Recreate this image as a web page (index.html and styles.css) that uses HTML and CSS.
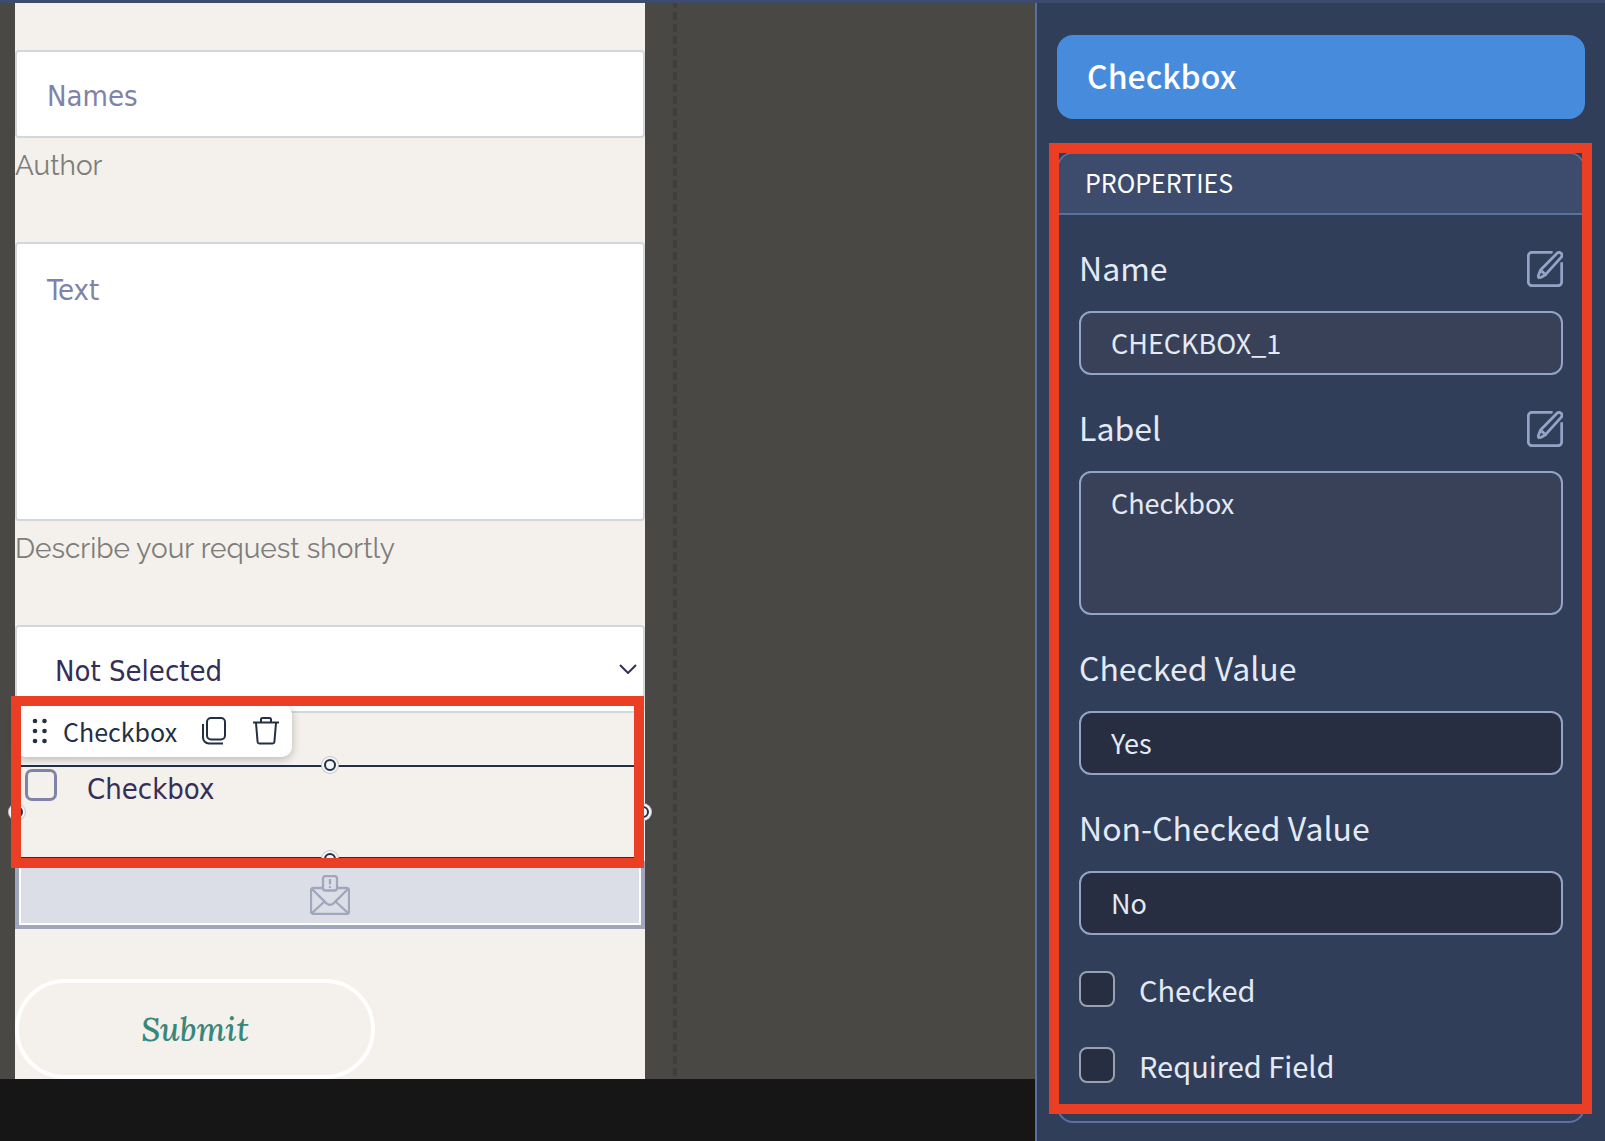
FILE: index.html
```html
<!DOCTYPE html>
<html lang="en">
  <head>
    <meta charset="UTF-8" />
    <meta name="viewport" content="width=device-width, initial-scale=1.0" />
    <title>Form Editor</title>
    <link rel="stylesheet" href="styles.css">
  </head>
  <body>
    <div class="editor">
      <main class="workspace">
        <div class="canvas">
          <form class="page">
            <input class="field" type="text" placeholder="Names" aria-label="Names" />
            <p class="hint">Author</p>

            <textarea class="field field-area" placeholder="Text" aria-label="Text"></textarea>
            <p class="hint">Describe your request shortly</p>

            <div class="select-wrap">
              <select class="field" aria-label="Option">
                <option>Not Selected</option>
              </select>
              <svg class="chevron" viewBox="0 0 18 10"><path d="M1 1l8 8 8-8" /></svg>
            </div>

            <!-- Selected widget -->
            <div class="widget">
              <label class="widget-label">
                <input type="checkbox" class="widget-check" />
                Checkbox
              </label>
              <span class="handle handle-top"></span>
              <span class="handle handle-bottom"></span>
              <span class="handle handle-left"></span>
              <span class="handle handle-right"></span>

              <div class="toolbar">
                <svg class="grip" width="16" height="26" viewBox="0 0 16 26">
                  <circle cx="3" cy="3" r="2.3" /><circle cx="12.500" cy="3" r="2.3" />
                  <circle cx="3" cy="13" r="2.3" /><circle cx="12.500" cy="13" r="2.3" />
                  <circle cx="3" cy="23" r="2.3" /><circle cx="12.500" cy="23" r="2.3" />
                </svg>
                <span class="toolbar-title">Checkbox</span>
                <button type="button" class="tool" aria-label="Copy">
                  <svg width="26" height="30" viewBox="0 0 26 30">
                    <rect x="6" y="2" width="18" height="21.5" rx="4" />
                    <path d="M2 8v13.500a6 6 0 0 0 6 6h14" />
                  </svg>
                </button>
                <button type="button" class="tool" aria-label="Delete">
                  <svg width="26" height="30" viewBox="0 0 26 30">
                    <path d="M0 6.500h26M8 6V3.500a1.500 1.500 0 0 1 1.500-1.500h7a1.500 1.500 0 0 1 1.500 1.500V6M3 7l1.600 19a1.700 1.700 0 0 0 1.700 1.500h13.400a1.700 1.700 0 0 0 1.700-1.500L23 7" />
                  </svg>
                </button>
              </div>
              <div class="mark mark-widget"></div>
            </div>

            <div class="hidden-field">
              <svg width="40" height="40" viewBox="0 0 40 40">
                <rect x="1" y="13" width="38" height="26" rx="2.500" />
                <path d="M2 14l14.500 14.300q3.500 3 7 0L38 14M2 38l12.500-11.500M38 38L25.500 26.500" />
                <rect class="badge" x="13" y="1" width="14" height="14.500" rx="2.500" />
                <path class="bang" d="M20 4v5.500M20 11.200v1.800" />
              </svg>
            </div>

            <button type="submit" class="submit">Submit</button>
          </form>
          <div class="guide"></div>
        </div>
        <div class="footer"></div>
      </main>

      <aside class="panel">
        <h1 class="panel-title">Checkbox</h1>
        <section class="card">
          <h2 class="card-title">Properties</h2>
          <div class="card-body">
            <div class="prop">
              <div class="prop-head">
                <label for="name">Name</label>
                <button type="button" class="edit" aria-label="Edit name">
                  <svg width="36" height="36" viewBox="0 0 36 36">
                    <path d="M24.500 1.300H5a3.700 3.700 0 0 0-3.700 3.700v26A3.700 3.700 0 0 0 5 34.700h26a3.700 3.700 0 0 0 3.700-3.700V12.500" />
                    <path d="M30 2.300a2.900 2.900 0 0 1 4.100 4.100L18.500 23.600l-4.200 2.700q-3.700 1.400-2.800-2l2-5.200zM13.600 19l5 4.700" />
                  </svg>
                </button>
              </div>
              <input id="name" class="control" type="text" value="CHECKBOX_1" />
            </div>
            <div class="prop">
              <div class="prop-head">
                <label for="label">Label</label>
                <button type="button" class="edit" aria-label="Edit label">
                  <svg width="36" height="36" viewBox="0 0 36 36">
                    <path d="M24.500 1.300H5a3.700 3.700 0 0 0-3.700 3.700v26A3.700 3.700 0 0 0 5 34.700h26a3.700 3.700 0 0 0 3.700-3.700V12.500" />
                    <path d="M30 2.300a2.900 2.900 0 0 1 4.100 4.100L18.500 23.600l-4.200 2.700q-3.700 1.400-2.800-2l2-5.200zM13.600 19l5 4.700" />
                  </svg>
                </button>
              </div>
              <textarea id="label" class="control control-area">Checkbox</textarea>
            </div>
            <div class="prop">
              <div class="prop-head"><label for="checked-value">Checked Value</label></div>
              <input id="checked-value" class="control control-dark" type="text" value="Yes" />
            </div>
            <div class="prop">
              <div class="prop-head"><label for="unchecked-value">Non-Checked Value</label></div>
              <input id="unchecked-value" class="control control-dark" type="text" value="No" />
            </div>
            <div class="toggles">
              <label class="toggle"><input type="checkbox" /> Checked</label>
              <label class="toggle"><input type="checkbox" /> Required Field</label>
            </div>
          </div>
          <div class="mark mark-card"></div>
        </section>
      </aside>
    </div>
  </body>
</html>
```
FILE: styles.css
```css
* {
  box-sizing: border-box;
}

body {
  margin: 0;
  background-color: #303e59;
  font-family: "Noto Sans CJK SC", "Noto Sans", sans-serif;
}

.editor {
  display: flex;
  height: 100vh;
  border-top: 3px solid #3d4c6d;
  overflow: hidden;
}

/* Workspace */

.workspace {
  flex: 1;
  min-width: 0;
  display: flex;
  flex-direction: column;
}

.canvas {
  flex: 1;
  min-height: 0;
  display: flex;
  padding-left: 15px;
  background-color: #4a4845;
}

.page {
  flex: 0 1 630px;
  padding-top: 47px;
  background-color: #f4f0eb;
}

.guide {
  width: 4px;
  margin-left: 28px;
  background: repeating-linear-gradient(#3f3f3f 0 5px, transparent 5px 9px, #3f3f3f 9px 12px);
}

.footer {
  height: 62px;
  background-color: #161616;
}

.field {
  display: block;
  width: 100%;
  height: 88px;
  padding: 4px 30px 0;
  border: 2px solid #d3d7da;
  border-radius: 4px;
  background-color: #fff;
  color: #352f57;
  font-family: "DejaVu Sans Condensed", "DejaVu Sans", sans-serif;
  font-size: 29px;
  appearance: none;
}

.field::placeholder {
  color: #8082a8;
  opacity: 1;
}

.field-area {
  height: 279px;
  padding-top: 29px;
  resize: none;
}

.hint {
  height: 104px;
  margin: 0;
  padding-top: 11px;
  color: #7d7d7b;
  font-family: Raleway, Lato, sans-serif;
  font-size: 28px;
  line-height: 34px;
}

.select-wrap {
  position: relative;
}

.select-wrap .field {
  padding: 4px 38px 0;
}

.chevron {
  position: absolute;
  right: 8px;
  top: 39px;
  width: 18px;
  height: 10px;
  fill: none;
  stroke: #352f57;
  stroke-width: 2;
}

.widget {
  position: relative;
  height: 94px;
  margin: 52px 1px 2px;
  padding: 2px 7px;
  border: 2px solid #232f42;
  box-shadow: 0 0 0 1px #f3f5f9;
}

.widget-label {
  display: flex;
  gap: 30px;
  color: #352f57;
  font-family: "DejaVu Sans Condensed", "DejaVu Sans", sans-serif;
  font-size: 29px;
  line-height: 40px;
}

.widget-check {
  width: 32px;
  height: 32px;
  margin: 0;
  border: 3px solid #8082a8;
  border-radius: 7px;
  appearance: none;
}

.handle {
  position: absolute;
  width: 12px;
  height: 12px;
  border: 2px solid #232f42;
  border-radius: 50%;
  background-color: #f3f5f9;
  box-shadow: 0 0 0 2px #f3f5f9, 0 0 0 3px #c4c6cb;
}

.handle-top {
  top: -8px;
  left: calc(50% - 6px);
}

.handle-bottom {
  bottom: -8px;
  left: calc(50% - 6px);
}

.handle-left {
  left: -7px;
  top: calc(50% - 6px);
}

.handle-right {
  right: -7px;
  top: calc(50% - 6px);
}

.toolbar {
  position: absolute;
  top: -63px;
  left: -3px;
  display: flex;
  align-items: center;
  height: 53px;
  padding: 0 13px 0 17px;
  border-radius: 10px;
  background-color: #fff;
  color: #232f42;
  box-shadow: 0 2px 8px rgba(0, 0, 0, 0.25);
}

.toolbar-title {
  margin: 0 8px 0 15px;
  font-size: 25px;
  line-height: 36px;
}

.grip {
  fill: #232f42;
}

.tool {
  display: flex;
  margin-left: 16px;
  padding: 0;
  border: none;
  background: none;
}

.tool + .tool {
  margin-left: 26px;
}

.tool svg {
  fill: none;
  stroke: #232f42;
  stroke-width: 2;
}

/* Red highlight frames */

.mark {
  position: absolute;
  border: 10px solid #eb3f25;
  pointer-events: none;
}

.mark-widget {
  top: -71px;
  right: -2px;
  bottom: -11px;
  left: -7px;
}

.mark-card {
  top: -11px;
  right: -9px;
  bottom: 7px;
  left: -10px;
}

.hidden-field {
  display: flex;
  justify-content: center;
  padding: 8px 0;
  height: 68px;
  border: 4px solid #a0a7bc;
  background-color: #dbdee6;
  box-shadow: inset 0 0 0 2px #fff;
}

.hidden-field svg {
  margin-top: 2px;
  fill: none;
  stroke: #a0a7bc;
  stroke-width: 2.3;
}

.hidden-field .badge {
  fill: #dbdee6;
}

.submit {
  width: 360px;
  height: 100px;
  margin-top: 50px;
  padding: 0;
  border: 4px solid #fff;
  border-radius: 50px;
  background: none;
  color: #38877a;
  font-family: Lora, "Liberation Serif", serif;
  font-size: 33px;
  font-style: italic;
  font-weight: 500;
}

/* Right panel */

.panel {
  flex: 0 0 570px;
  padding: 32px 20px;
  border-left: 2px solid #5a71a0;
  background-color: #303e59;
  color: #e4eaf5;
}

.panel-title {
  height: 84px;
  margin: 0 0 33px;
  padding: 0 30px;
  border-radius: 16px;
  background-color: #478bdd;
  color: #fff;
  font-size: 32px;
  font-weight: 500;
  line-height: 80px;
}

.card {
  position: relative;
  border: 2px solid #5a71a0;
  border-radius: 16px;
}

.card-title {
  height: 61px;
  margin: 0;
  padding: 0 26px;
  border-bottom: 2px solid #5a71a0;
  border-radius: 14px 14px 0 0;
  background-color: #3d4c6d;
  color: #fff;
  font-size: 25px;
  font-weight: 400;
  line-height: 56px;
  text-transform: uppercase;
}

.card-body {
  padding: 0 20px 38px;
}

.prop {
  padding-top: 28px;
}

.prop-head {
  display: flex;
  align-items: center;
  justify-content: space-between;
  height: 52px;
  margin-bottom: 16px;
  font-size: 32px;
  line-height: 48px;
}

.prop-head label {
  padding-bottom: 4px;
}

.edit {
  display: flex;
  padding: 0;
  border: none;
  background: none;
}

.edit svg {
  fill: none;
  stroke: #94a3c6;
  stroke-width: 2.8;
  stroke-linecap: round;
  stroke-linejoin: round;
}

.control {
  display: block;
  width: 100%;
  height: 64px;
  padding: 0 30px 2px;
  border: 2px solid #94a3c6;
  border-radius: 12px;
  background-color: #394159;
  color: #e4eaf5;
  font-family: inherit;
  font-size: 27px;
}

.control-area {
  height: 144px;
  padding-top: 10px;
  line-height: 40px;
  resize: none;
}

.control-dark {
  background-color: #272e41;
}

.toggles {
  display: flex;
  flex-direction: column;
  gap: 40px;
  padding-top: 36px;
}

.toggle {
  display: flex;
  align-items: center;
  gap: 24px;
  height: 36px;
  font-size: 29px;
  line-height: 36px;
}

.toggle input {
  width: 36px;
  height: 36px;
  margin: 0;
  border: 2px solid #97a2b1;
  border-radius: 8px;
  background-color: #272e41;
  appearance: none;
}
```
